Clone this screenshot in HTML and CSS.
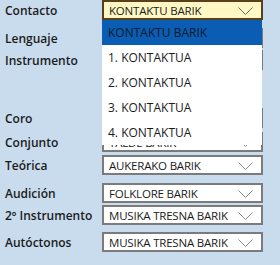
FILE: index.html
```html
<!DOCTYPE html>
<html>
<head>
<meta charset="utf-8">
<link rel="stylesheet" href="styles.css">
</head>
<body>
<div class="form">
  <div class="row r-contacto">
    <span class="label">Contacto</span>
    <div class="combo focused"><span class="value">KONTAKTU BARIK</span><svg class="chev" width="15" height="8" viewBox="0 0 15 8"><path d="M0.5 0.5 L7.5 7.5 L14.5 0.5" fill="none" stroke="#6b6b6b" stroke-width="1"/></svg></div>
    <ul class="dropdown">
      <li class="selected">KONTAKTU BARIK</li>
      <li>1. KONTAKTUA</li>
      <li>2. KONTAKTUA</li>
      <li>3. KONTAKTUA</li>
      <li>4. KONTAKTUA</li>
    </ul>
  </div>
  <div class="row r-lenguaje">
    <span class="label">Lenguaje</span>
    <div class="combo"></div>
  </div>
  <div class="row r-instrumento">
    <span class="label">Instrumento</span>
    <div class="combo"></div>
  </div>
  <div class="row r-coro">
    <span class="label">Coro</span>
    <div class="combo"></div>
  </div>
  <div class="row r-conjunto">
    <span class="label">Conjunto</span>
    <div class="combo"><span class="value">TALDE BARIK</span><svg class="chev" width="15" height="8" viewBox="0 0 15 8"><path d="M0.5 0.5 L7.5 7.5 L14.5 0.5" fill="none" stroke="#8a8a8a" stroke-width="1"/></svg></div>
  </div>
  <div class="row r-teorica">
    <span class="label">Teórica</span>
    <div class="combo"><span class="value">AUKERAKO BARIK</span><svg class="chev" width="15" height="8" viewBox="0 0 15 8"><path d="M0.5 0.5 L7.5 7.5 L14.5 0.5" fill="none" stroke="#8a8a8a" stroke-width="1"/></svg></div>
  </div>
  <div class="row r-audicion">
    <span class="label">Audición</span>
    <div class="combo"><span class="value">FOLKLORE BARIK</span><svg class="chev" width="15" height="8" viewBox="0 0 15 8"><path d="M0.5 0.5 L7.5 7.5 L14.5 0.5" fill="none" stroke="#8a8a8a" stroke-width="1"/></svg></div>
  </div>
  <div class="row r-segundo">
    <span class="label">2º Instrumento</span>
    <div class="combo"><span class="value">MUSIKA TRESNA BARIK</span><svg class="chev" width="15" height="8" viewBox="0 0 15 8"><path d="M0.5 0.5 L7.5 7.5 L14.5 0.5" fill="none" stroke="#8a8a8a" stroke-width="1"/></svg></div>
  </div>
  <div class="row r-autoctonos">
    <span class="label">Autóctonos</span>
    <div class="combo"><span class="value">MUSIKA TRESNA BARIK</span><svg class="chev" width="15" height="8" viewBox="0 0 15 8"><path d="M0.5 0.5 L7.5 7.5 L14.5 0.5" fill="none" stroke="#8a8a8a" stroke-width="1"/></svg></div>
  </div>
</div>
</body>
</html>
```
FILE: styles.css
```css
html, body {
  margin: 0;
  padding: 0;
  background: #c9dcee;
  width: 280px;
  height: 265px;
  overflow: hidden;
}
body {
  font-family: "Open Sans", "Noto Sans", sans-serif;
  color: #1b1b1b;
}
.form {
  display: flex;
  flex-direction: column;
  position: relative;
}
.row {
  display: flex;
  align-items: center;
  height: 20px;
  position: relative;
}
.label {
  width: 102px;
  padding-left: 5px;
  box-sizing: border-box;
  font-size: 12px;
  font-weight: 600;
  white-space: nowrap;
}
.combo {
  width: 161px;
  height: 20px;
  box-sizing: border-box;
  border: 2px solid #7b7b7b;
  background: #ffffff;
  display: flex;
  align-items: center;
  justify-content: space-between;
  padding: 0 8px 0 5px;
  font-size: 11.5px;
  letter-spacing: -0.2px;
}
.combo.focused {
  border-color: #5a3f1d;
  background: #fff8c4;
}
.value {
  white-space: nowrap;
}
.chev {
  display: block;
  flex: none;
  margin-top: 1px;
}
.r-lenguaje { margin-top: 8px; }
.r-instrumento { margin-top: 2px; }
.r-coro { margin-top: 38px; }
.r-conjunto { margin-top: 4px; }
.r-teorica { margin-top: 3px; }
.r-audicion { margin-top: 8px; }
.r-segundo { margin-top: 2px; }
.r-autoctonos { margin-top: 7px; }
.dropdown {
  position: absolute;
  left: 102px;
  top: 20px;
  width: 160px;
  margin: 0;
  padding: 0;
  list-style: none;
  background: #ffffff;
  z-index: 10;
  font-size: 12px;
}
.dropdown li {
  height: 25px;
  line-height: 25px;
  padding-left: 6px;
  white-space: nowrap;
}
.dropdown li.selected {
  background: #0a5db2;
  color: #0e1a2a;
}
```
